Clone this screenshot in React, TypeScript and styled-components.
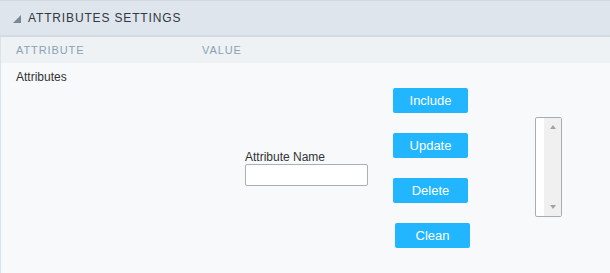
import React from "react";
import styled, { createGlobalStyle } from "styled-components";

const Global = createGlobalStyle`
  html, body { margin: 0; padding: 0; background: #f7f9fb; }
  body { font-family: Arial, "Liberation Sans", sans-serif; }
  * { box-sizing: border-box; }
`;

const Page = styled.div`
  width: 610px;
  height: 273px;
  display: flex;
  flex-direction: column;
  overflow: hidden;
`;

const Header = styled.div`
  height: 37px;
  flex: none;
  background: #dfe5ec;
  border-top: 1px solid #d0d9e0;
  border-bottom: 2px solid #d2dbe2;
  display: flex;
  align-items: center;
  padding-left: 13px;
  gap: 7px;
`;

const Caret = styled.span`
  width: 0;
  height: 0;
  border-left: 8px solid transparent;
  border-bottom: 8px solid #7a8895;
  margin-top: 2px;
`;

const Title = styled.span`
  font-size: 12px;
  letter-spacing: 0.85px;
  color: #333842;
  line-height: 14px;
`;

const ColHeader = styled.div`
  height: 26px;
  flex: none;
  background: #eef2f5;
  border-left: 1px solid #dbe3ea;
  display: flex;
  align-items: center;
`;

const ColTitle = styled.span<{ $w?: number; $pad?: number }>`
  font-size: 11px;
  letter-spacing: 0.9px;
  color: #8aa2b4;
  padding-left: ${(p) => p.$pad ?? 0}px;
  width: ${(p) => (p.$w ? `${p.$w}px` : "auto")};
`;

const Body = styled.div`
  flex: 1;
  background: #f7f9fb;
  border-left: 1px solid #dbe3ea;
  display: flex;
  align-items: flex-start;
  padding-top: 7px;
`;

const LabelCell = styled.div`
  width: 201px;
  padding-left: 15px;
  font-size: 12px;
  line-height: 14px;
  color: #333;
`;

const ValueCell = styled.div`
  padding-top: 18px;
  padding-left: 43px;
  display: flex;
  align-items: center;
`;

const Field = styled.div`
  display: flex;
  flex-direction: column;
  margin-right: 25px;
`;

const FieldLabel = styled.label`
  font-size: 12px;
  line-height: 14px;
  color: #333;
`;

const Input = styled.input`
  width: 123px;
  height: 22px;
  margin: 0;
  border: 1px solid #a9afb8;
  border-radius: 2px;
  background: #fff;
  font-size: 12px;
  padding: 0 3px;
`;

const Buttons = styled.div`
  display: flex;
  flex-direction: column;
  gap: 20px;
  margin-right: 65px;
`;

const Button = styled.button<{ $shift?: number }>`
  width: 75px;
  height: 25px;
  margin: 0 0 0 ${(p) => p.$shift ?? 0}px;
  padding: 0;
  border: none;
  border-radius: 2px;
  background: #21b6ff;
  color: #fff;
  font-family: Arial, "Liberation Sans", sans-serif;
  font-size: 13px;
  line-height: 25px;
  cursor: pointer;
`;

const ListBox = styled.div`
  width: 27px;
  height: 100px;
  margin-top: -2px;
  border: 1px solid #a9adb2;
  border-radius: 2px;
  background: #fff;
  display: flex;
  justify-content: flex-end;
  overflow: hidden;
`;

const Track = styled.div`
  width: 17px;
  background: #f0f0f0;
  display: flex;
  flex-direction: column;
  justify-content: space-between;
  align-items: center;
  padding: 7px 0 7px;
`;

const Arrow = styled.span<{ $down?: boolean }>`
  width: 0;
  height: 0;
  border-left: 3.5px solid transparent;
  border-right: 3.5px solid transparent;
  ${(p) =>
    p.$down
      ? "border-top: 4px solid #a3a3a3;"
      : "border-bottom: 4px solid #a3a3a3;"}
`;

export default function App() {
  return (
    <Page>
      <Global />
      <Header>
        <Caret />
        <Title>ATTRIBUTES SETTINGS</Title>
      </Header>
      <ColHeader>
        <ColTitle $w={201} $pad={15}>ATTRIBUTE</ColTitle>
        <ColTitle>VALUE</ColTitle>
      </ColHeader>
      <Body>
        <LabelCell>Attributes</LabelCell>
        <ValueCell>
          <Field>
            <FieldLabel>Attribute Name</FieldLabel>
            <Input type="text" />
          </Field>
          <Buttons>
            <Button>Include</Button>
            <Button>Update</Button>
            <Button>Delete</Button>
            <Button $shift={2}>Clean</Button>
          </Buttons>
          <ListBox>
            <Track>
              <Arrow />
              <Arrow $down />
            </Track>
          </ListBox>
        </ValueCell>
      </Body>
    </Page>
  );
}
